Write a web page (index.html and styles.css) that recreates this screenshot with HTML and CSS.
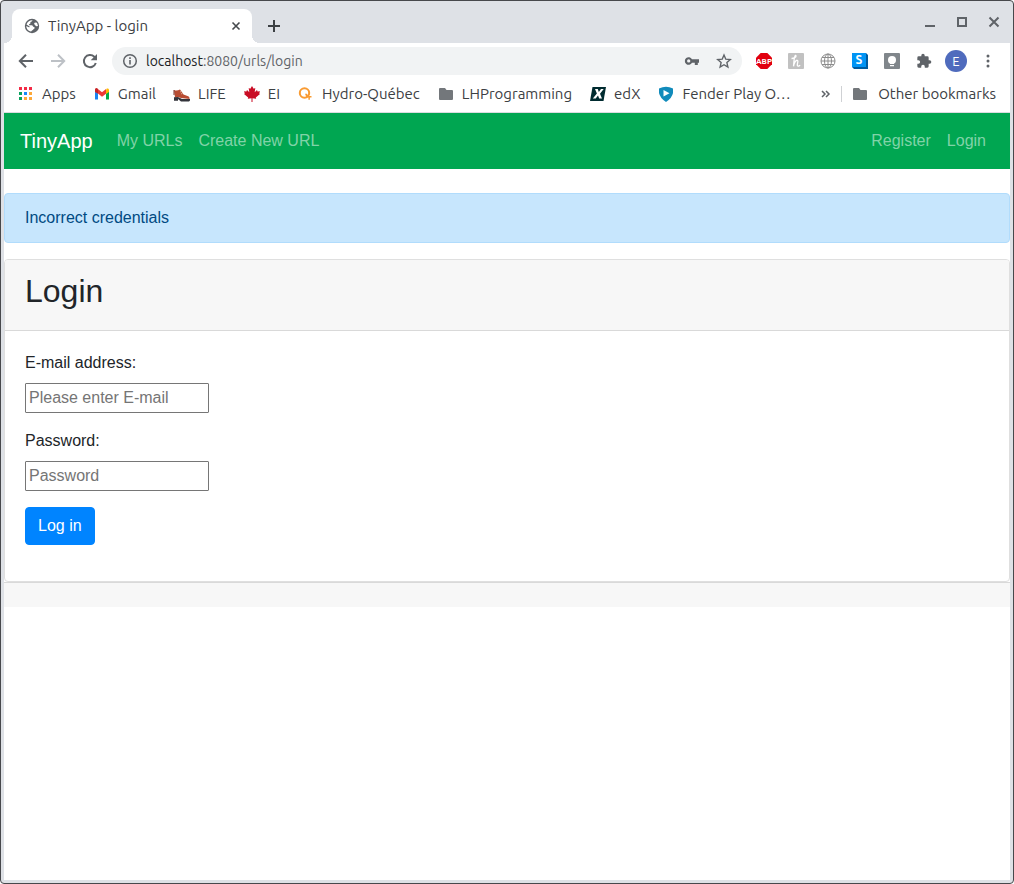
FILE: index.html
```html
<!DOCTYPE html>
<html lang="en">
<head>
<meta charset="utf-8">
<title>TinyApp - login</title>
<link rel="stylesheet" href="styles.css">
</head>
<body>
<div class="window">
  <header class="chrome">
    <div class="tabstrip">
      <div class="tab">
        <svg class="tab-icon" width="16" height="16" viewBox="0 0 16 16"><circle cx="8" cy="8" r="7.200" fill="#5f6368"/><path d="M8.500 2.300c-.3 1.500-1.300 1.200-2 1.700-.4.700.4 1.300-.4 1.700-1 .1-1.300.8-.8 1.500h2.400c1.500.1 1 1.700 2.300 1.800 1.100.3.800 1.700-.1 2-.9.200-.6 1.300-1.500 1.300-.7 0-.5 1.200-1.600 1.200C3.900 13 2.200 10.500 2.300 8l2.500 1.300c1 .3 1.100-.5.500-1L2.500 6.500C3.300 4 5.500 2.200 8.500 2.300ZM11 4.500l2 .3 1 3.200-1.500.3c-1.200-.2-1-1.400-2-1.800-.6-.7-.4-1.600.5-2Z" fill="#fff"/></svg>
        <span class="tab-title">TinyApp - login</span>
        <button class="icon-btn" aria-label="Close tab"><svg width="16" height="16" viewBox="0 0 16 16"><path d="m4.500 4.500 7 7m0-7-7 7" stroke="#45494d" stroke-width="1.600"/></svg></button>
      </div>
      <button class="icon-btn new-tab" aria-label="New tab"><svg width="16" height="16" viewBox="0 0 16 16"><path d="M8 2v12M2 8h12" stroke="#3c4043" stroke-width="2"/></svg></button>
      <div class="window-controls">
        <button class="icon-btn" aria-label="Minimize"><svg width="16" height="16" viewBox="0 0 16 16"><path d="M3 12h10" stroke="#5f6368" stroke-width="2"/></svg></button>
        <button class="icon-btn" aria-label="Maximize"><svg width="16" height="16" viewBox="0 0 16 16"><path d="M4 4h8v8H4z" fill="none" stroke="#5f6368" stroke-width="2"/></svg></button>
        <button class="icon-btn" aria-label="Close window"><svg width="16" height="16" viewBox="0 0 16 16"><path d="m3.500 3.500 9 9m0-9-9 9" stroke="#5f6368" stroke-width="2"/></svg></button>
      </div>
    </div>

    <div class="toolbar">
      <div class="nav-buttons">
        <button class="icon-btn" aria-label="Back"><svg width="16" height="16" viewBox="0 0 16 16"><path d="M15 8H2.500M8 1.800 1.800 8 8 14.200" fill="none" stroke="#5f6368" stroke-width="2"/></svg></button>
        <button class="icon-btn" aria-label="Forward"><svg width="16" height="16" viewBox="0 0 16 16"><path d="M1 8h12.500M8 1.800 14.200 8 8 14.200" fill="none" stroke="#bdc1c6" stroke-width="2"/></svg></button>
        <button class="icon-btn" aria-label="Reload"><svg width="16" height="16" viewBox="0 0 16 16"><path d="M13.800 10A6.100 6.100 0 1 1 12.300 3.700L14 5.500" fill="none" stroke="#5f6368" stroke-width="2"/><path d="M15 1v6.300H8.700Z" fill="#5f6368"/></svg></button>
      </div>
      <div class="omnibox">
        <svg width="16" height="16" viewBox="0 0 16 16"><circle cx="8" cy="8" r="6.300" fill="none" stroke="#5f6368" stroke-width="1.500"/><path d="M8 7v4.500M8 4.300V6" stroke="#5f6368" stroke-width="1.600"/></svg>
        <span class="url"><span class="host">localhost</span>:8080/urls/login</span>
        <button class="icon-btn" aria-label="Saved passwords"><svg width="16" height="16" viewBox="0 0 16 16"><path fill-rule="evenodd" d="M8 6.200h7v3.500h-1.200V12h-3V9.700H8a3.800 3.800 0 1 1 0-3.500ZM4.700 6.300a1.600 1.600 0 1 0 0 3.300 1.600 1.600 0 0 0 0-3.300Z" fill="#5f6368"/></svg></button>
        <button class="icon-btn" aria-label="Bookmark this page"><svg width="16" height="16" viewBox="0 0 16 16"><path d="m8 2 1.800 4.200 4.500.4-3.400 3 1 4.500L8 11.700l-3.900 2.400 1-4.500-3.400-3 4.500-.4Z" fill="none" stroke="#5f6368" stroke-width="1.400"/></svg></button>
      </div>
      <div class="extensions">
        <button class="icon-btn" aria-label="Adblock Plus"><svg width="16" height="16" viewBox="0 0 16 16"><path d="M4.700 0h6.600L16 4.700v6.600L11.300 16H4.700L0 11.300V4.700Z" fill="#e1000f"/><text x="8" y="11" text-anchor="middle" class="abp">ABP</text></svg></button>
        <button class="icon-btn" aria-label="Honey"><svg width="16" height="16" viewBox="0 0 16 16"><rect width="16" height="16" rx="1" fill="#c1c1c1"/><path d="M3.500 5.500C6 5.500 8.500 4 8 2.700 7.500 1.700 6.500 3.500 6.200 6L5.500 13.300C6 10 8 7 9.300 7.300c1.500.3-.6 4.200.1 5.400.5.900 2 .4 2.600-.7" fill="none" stroke="#fff" stroke-width="1.300"/></svg></button>
        <button class="icon-btn" aria-label="Globe"><svg width="16" height="16" viewBox="0 0 16 16"><g fill="none" stroke="#8c8c8c"><circle cx="8" cy="8" r="7"/><ellipse cx="8" cy="8" rx="3.500" ry="7"/><path d="M8 1v14M1 8h14M2 4.500h12M2 11.500h12"/></g></svg></button>
        <button class="icon-btn" aria-label="S extension"><svg width="16" height="16" viewBox="0 0 16 16"><path d="M0 0h14l2 2v14H2l-2-2Z" fill="#005b9f"/><path d="M0 0h14v14H0Z" fill="#0094f5"/><text x="7" y="11" text-anchor="middle" class="letter-s">S</text></svg></button>
        <button class="icon-btn" aria-label="Lightbulb"><svg width="16" height="16" viewBox="0 0 16 16"><rect width="16" height="16" rx="1" fill="#80868b"/><circle cx="8" cy="7" r="4" fill="#fff"/><path d="M6 9h4v2H6zM6 12h4v1.200H6z" fill="#fff"/></svg></button>
        <button class="icon-btn" aria-label="Extensions"><svg width="16" height="16" viewBox="0 0 24 24"><path d="M20.500 11H19V7a2 2 0 0 0-2-2h-4V3.500a2.500 2.500 0 0 0-5 0V5H4a2 2 0 0 0-2 2v3.800h1.500a2.700 2.700 0 0 1 0 5.400H2V20a2 2 0 0 0 2 2h3.800v-1.500a2.700 2.700 0 0 1 5.400 0V22H17a2 2 0 0 0 2-2v-4h1.500a2.500 2.500 0 0 0 0-5Z" fill="#5f6368"/></svg></button>
      </div>
      <button class="avatar" aria-label="Profile">E</button>
      <button class="icon-btn" aria-label="Menu"><svg width="16" height="16" viewBox="0 0 16 16"><g fill="#5f6368"><circle cx="8" cy="3" r="1.500"/><circle cx="8" cy="8" r="1.500"/><circle cx="8" cy="13" r="1.500"/></g></svg></button>
    </div>

    <nav class="bookmarks" aria-label="Bookmarks">
      <a class="bookmark" href="#"><svg width="16" height="16" viewBox="0 0 16 16"><path d="M1 1h3v3H1zM6 1h3v3H6zM11 1h3v3h-3z" fill="#f32b46"/><path d="M1 6h3v3H1z" fill="#09a25d"/><path d="M6 6h3v3H6z" fill="#1689fa"/><path d="M11 6h3v3h-3zM11 11h3v3h-3zM6 11h3v3H6z" fill="#fda838"/><path d="M1 11h3v3H1z" fill="#09a25d"/></svg>Apps</a>
      <a class="bookmark" href="#"><svg width="16" height="16" viewBox="0 0 16 16"><path d="M1 4v9.500h3V6Z" fill="#1a84f0"/><path d="M12 6v7.500h3V4Z" fill="#00ac47"/><path d="M12 4.500V8l3-2V4c0-1.500-1.500-2-2.500-1.200Z" fill="#ffba00"/><path d="M1 6V4c0-1.600 1.500-2 2.500-1.300L8 6.200l4-3.200v4.700l-4 3.100-4-3.200Z" fill="#ed3935"/><path d="M1 4c0-1.600 1.500-2 2.500-1.300L4 3v4.600L1 5.700Z" fill="#c52528"/></svg>Gmail</a>
      <a class="bookmark" href="#"><svg width="16" height="16" viewBox="0 0 16 16"><path d="M0 4c2 1 4 .5 6-.5l3.500 5 4 1.500c2 .6 2 1.500 2 3L7 12l-3-1-3 .5Z" fill="#b84c32"/><path d="M0 11.200 4 11l4 2h8v1.500l-1 1H7L4 13v1.700H0Z" fill="#33343b"/><path d="m6 6 1.500-.6M7 8l1.500-.8" stroke="#dab09a"/><path d="M0 4v5" stroke="#793028" fill="none"/></svg>LIFE</a>
      <a class="bookmark" href="#"><svg width="16" height="16" viewBox="0 0 16 16"><path d="m8 0 1.700 2.800L11.300 2l-.6 4.300L13 4l.6 1.500 2.400-.3L15.200 7.500l.8.600-4.200 3.400.4 1.300-3.700-.5V16h-1v-3.700l-3.700.5.400-1.300L0 8.100l.8-.6L0 5.200l2.400.3L3 4l2.300 2.300L4.700 2l1.600.8Z" fill="#c90c24"/></svg>EI</a>
      <a class="bookmark" href="#"><svg width="16" height="16" viewBox="0 0 16 16"><circle cx="6.500" cy="7" r="4.700" fill="none" stroke="#f99b32" stroke-width="2"/><path d="M7 7.800h2l1.300 2.200h3.200v1.400h-1.600v2.400h-1.500v-2.400H8.500Z" fill="#f99b32"/></svg>Hydro-Québec</a>
      <a class="bookmark folder" href="#"><svg width="16" height="16" viewBox="0 0 16 16"><path d="M2 2h5l1.500 2H14q1 0 1 1v8q0 1-1 1H2q-1 0-1-1V3q0-1 1-1Z" fill="#73777b"/></svg>LHProgramming</a>
      <a class="bookmark" href="#"><svg width="16" height="16" viewBox="0 0 16 16"><path d="M2.500 1H16l-2.500 14H0Z" fill="#002b30"/><path d="M5 3h2.800l1 3L11 3h2.700L10 7.700l2 4.800H9.200L8 9.500l-2.300 3H2.800L6.900 7.600Z" fill="#fff"/></svg>edX</a>
      <a class="bookmark" href="#"><svg width="16" height="16" viewBox="0 0 16 16"><path d="M1 2.500Q8-1 15 2.500V7q-1 5-7 9Q2 12 1 7Z" fill="#118bbb"/><path d="m5.500 4 6 3.200-6 3.300Z" fill="#fff"/></svg>Fender Play O…</a>
      <button class="overflow" aria-label="More bookmarks"><svg width="10" height="10" viewBox="0 0 10 10"><path d="m1 2 3 3-3 3m4-6 3 3-3 3" fill="none" stroke="#5f6368" stroke-width="1.500"/></svg></button>
      <a class="bookmark other" href="#"><svg width="16" height="16" viewBox="0 0 16 16"><path d="M2 2h5l1.500 2H14q1 0 1 1v8q0 1-1 1H2q-1 0-1-1V3q0-1 1-1Z" fill="#73777b"/></svg>Other bookmarks</a>
    </nav>
  </header>

  <div class="page">
    <nav class="navbar" aria-label="Main">
      <a class="brand" href="#">TinyApp</a>
      <a class="nav-link" href="#">My URLs</a>
      <a class="nav-link" href="#">Create New URL</a>
      <div class="nav-end">
        <a class="nav-link" href="#">Register</a>
        <a class="nav-link" href="#">Login</a>
      </div>
    </nav>
    <main>
      <div class="alert" role="alert">Incorrect credentials</div>
      <section class="card">
        <div class="card-header"><h2>Login</h2></div>
        <form class="card-body">
          <div class="field">
            <label for="email">E-mail address:</label>
            <input id="email" type="email" placeholder="Please enter E-mail">
          </div>
          <div class="field">
            <label for="password">Password:</label>
            <input id="password" type="password" placeholder="Password">
          </div>
          <button class="submit" type="submit">Log in</button>
        </form>
      </section>
    </main>
    <footer class="page-footer"></footer>
  </div>
</div>
</body>
</html>
```
FILE: styles.css
```css
* { box-sizing: border-box; }

body {
  margin: 0;
  background: #fff;
  color: #212529;
  font: 16px/24px "Liberation Sans", Arial, sans-serif;
}

a { color: inherit; text-decoration: none; }
button { font: inherit; cursor: pointer; }
svg { display: block; flex: none; overflow: visible; }

.window {
  display: flex;
  flex-direction: column;
  min-height: 100vh;
  border: 1px solid #47484c;
  border-radius: 4px;
  padding: 0 3px 3px;
  background: #dee1e6;
}

/* Browser chrome */
.chrome {
  color: #3c4043;
  font-family: Ubuntu, "Noto Sans", sans-serif;
  font-size: 14px;
}

.icon-btn {
  flex: none;
  padding: 0;
  border: 0;
  background: none;
}

.tabstrip {
  display: flex;
  align-items: center;
  height: 42px;
  padding: 0 8px;
}

.tab {
  display: flex;
  align-items: center;
  align-self: flex-end;
  gap: 8px;
  width: 240px;
  height: 34px;
  padding: 0 8px 0 12px;
  border-radius: 8px 8px 0 0;
  background: #fff;
  position: relative;
}

.tab::before,
.tab::after {
  content: "";
  position: absolute;
  bottom: 0;
  width: 8px;
  height: 8px;
}

.tab::before {
  left: -8px;
  background: radial-gradient(circle at 0 0, #dee1e6 8px, #fff 8px);
}

.tab::after {
  right: -8px;
  background: radial-gradient(circle at 100% 0, #dee1e6 8px, #fff 8px);
}

.tab-title { flex: 1; font-size: 15px; }
.new-tab { margin: 8px 0 0 14px; }

.window-controls {
  display: flex;
  gap: 16px;
  margin-left: auto;
}

.toolbar {
  display: flex;
  align-items: center;
  height: 36px;
  padding: 0 14px;
  background: #fff;
}

.nav-buttons { display: flex; gap: 16px; }

.omnibox {
  display: flex;
  flex: 1;
  align-items: center;
  gap: 16px;
  height: 28px;
  margin: 0 14px;
  padding: 0 10px;
  border-radius: 14px;
  background: #f1f3f4;
}

.url { flex: 1; margin-left: -8px; color: #5f6368; }
.host { color: #202124; }

.extensions { display: flex; gap: 16px; }

.abp { font: bold 8px/8px Ubuntu, "Open Sans", sans-serif; fill: #fff; }
.letter-s { font: bold 12px/12px Ubuntu, "Open Sans", sans-serif; fill: #fff; }

.avatar {
  width: 22px;
  height: 22px;
  margin: 0 13px;
  padding: 0;
  border: 0;
  border-radius: 50%;
  background: #4f6bbd;
  color: #fff;
  font-size: 13px;
  line-height: 22px;
}

.bookmarks {
  display: flex;
  align-items: center;
  gap: 18px;
  height: 34px;
  padding: 0 14px 4px;
  border-bottom: 1px solid #dadce0;
  background: #fff;
  font-size: 15px;
  white-space: nowrap;
}

.bookmark { display: flex; align-items: center; gap: 8px; }

.overflow {
  margin-left: auto;
  padding: 0;
  border: 0;
  background: none;
}

.other {
  gap: 10px;
  margin-left: -8px;
  padding-left: 10px;
  border-left: 1px solid #cfd1d4;
  line-height: 16px;
}

/* Page */
.page { flex: 1; background: #fff; }

.navbar {
  display: flex;
  align-items: center;
  gap: 16px;
  height: 56px;
  padding: 0 24px 0 16px;
  background: #00a651;
}

.brand { margin-right: 8px; color: #fff; font-size: 20px; }
.nav-link { color: #80d3a8; }
.nav-end { display: flex; gap: 16px; margin-left: auto; }

.alert {
  margin: 24px 0 16px;
  padding: 12px 20px;
  border: 1px solid #b1dcfc;
  border-radius: 4px;
  background: #c7e6fd;
  color: #004a82;
}

.card { border: 1px solid #dfdfdf; border-radius: 4px; }

.card-header {
  padding: 12px 20px 20px;
  border-bottom: 1px solid #d9d9d9;
  border-radius: 3px 3px 0 0;
  background: #f7f7f7;
}

h2 { margin: 0; font-size: 32px; font-weight: 400; line-height: 38px; }

.card-body { padding: 20px 20px 36px; }
.field { margin-bottom: 16px; }
.field label { display: block; margin-bottom: 8px; }

.field input {
  display: block;
  width: 184px;
  height: 30px;
  padding: 1px 3px;
  border: 1px solid #767676;
  border-radius: 1px;
  background: #fff;
  font: inherit;
}

.field input::placeholder { color: #757575; }

.submit {
  display: block;
  padding: 6px 12px;
  border: 1px solid #0084ff;
  border-radius: 4px;
  background: #0084ff;
  color: #fff;
}

.page-footer { height: 25px; border-top: 1px solid #d9d9d9; background: #f7f7f7; }
```
